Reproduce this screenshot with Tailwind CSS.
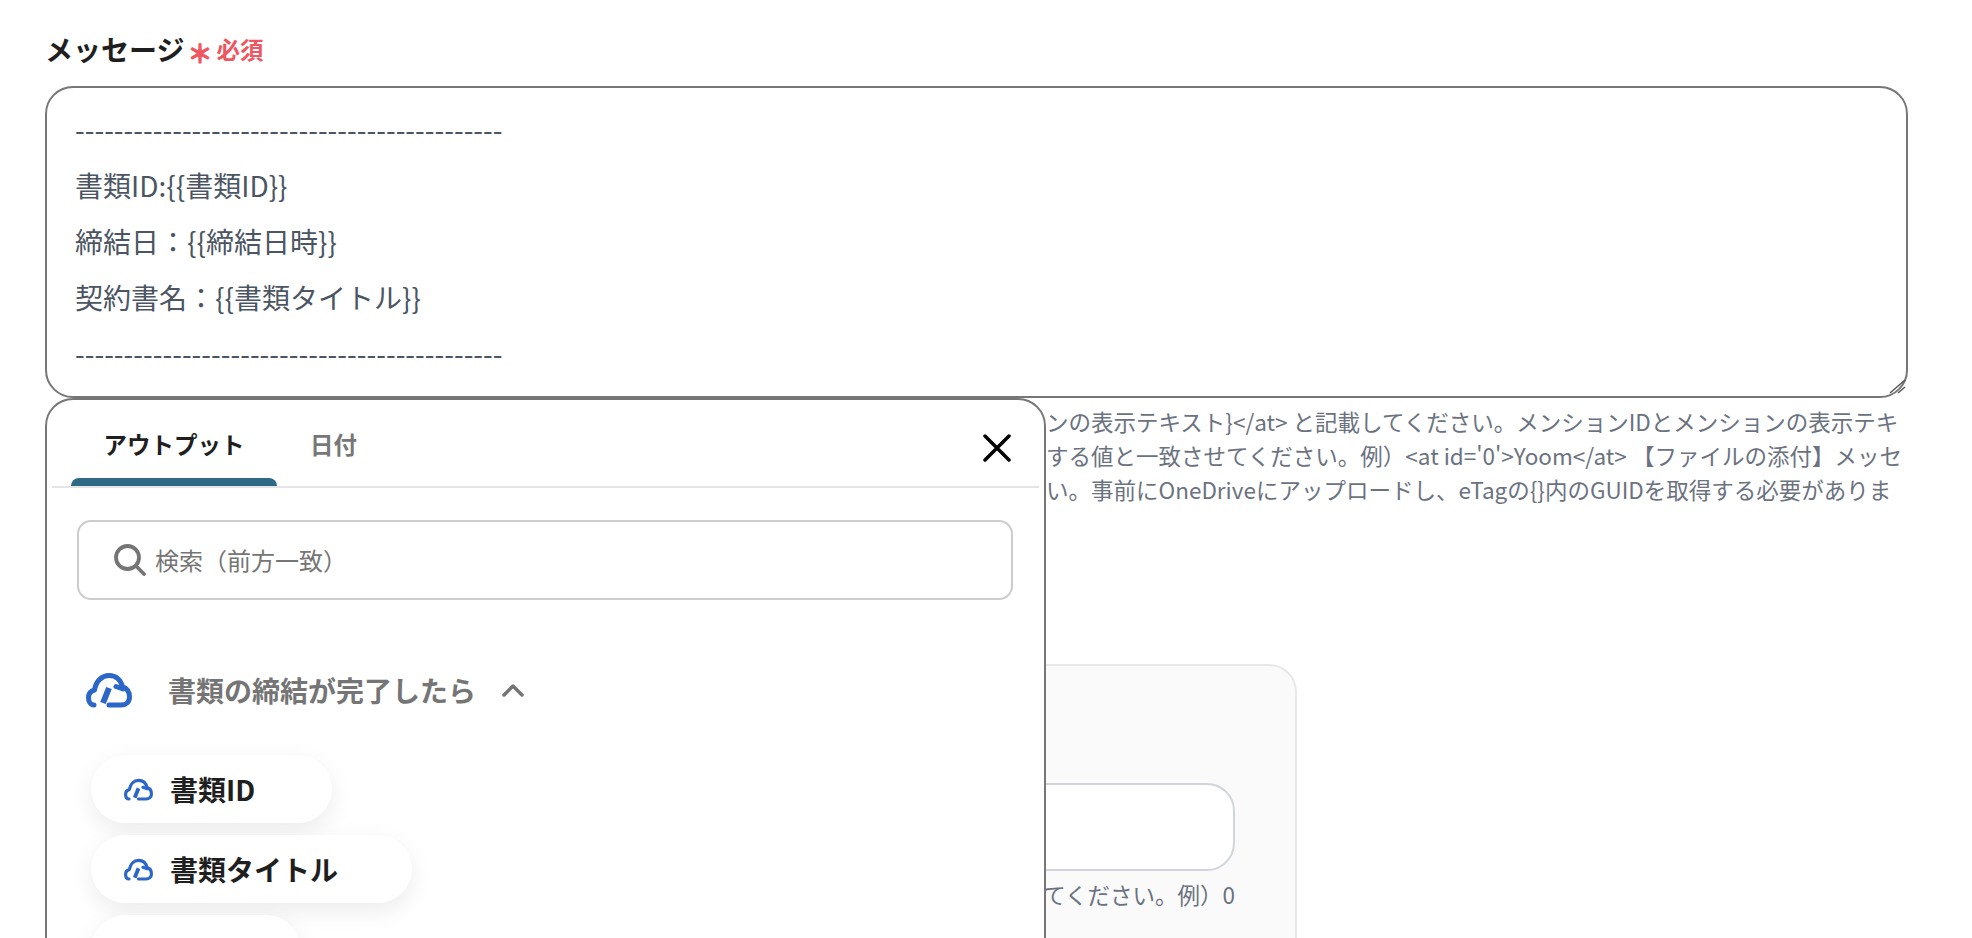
<!DOCTYPE html>
<html lang="ja">
<head>
    <meta charset="UTF-8">
    <title>メッセージ</title>
    <script src="https://cdn.jsdelivr.net/npm/@tailwindcss/browser@4"></script>
</head>
<body class="bg-white h-screen overflow-hidden font-['Noto_Sans_CJK_JP','Noto_Sans',sans-serif]">
    <div class="relative px-[45px] pt-[29px] h-[938px] overflow-hidden">
        <!-- label -->
        <div class="flex items-center h-[40px] mb-[17px]">
            <span class="text-[28px] font-bold text-[#1f1f1f]">メッセージ</span>
            <span class="ml-[3px] text-[25px] font-bold text-[#f0565f] leading-none mt-[6px] [-webkit-text-stroke:1px_#f0565f]">＊</span>
            <span class="ml-[4px] mt-[2px] text-[23.5px] font-bold text-[#f0565f]">必須</span>
        </div>

        <!-- message box -->
        <div class="relative">
            <textarea class="block w-[1863px] h-[312px] border-2 border-[#777] rounded-[28px] px-[28px] py-[13px] text-[28px] leading-[56px] text-[#4b5563] overflow-hidden resize-none" readonly>--------------------------------------------
書類ID:{{書類ID}}
締結日：{{締結日時}}
契約書名：{{書類タイトル}}
--------------------------------------------</textarea>
            <svg class="absolute left-[1843px] top-[292px] w-[18px] h-[16px]" viewBox="0 0 18 16" fill="none" stroke="#555" stroke-width="1.500">
                <path d="M2 15 17 2M10 15 17 9"/>
            </svg>
        </div>

        <!-- help text, the left part sits under the popup -->
        <div class="ml-[1001px] mt-[6px] w-[880px] text-[22.5px] leading-[34px] text-[#6b7280] whitespace-nowrap overflow-hidden">
            <div>ンの表示テキスト}&lt;/at&gt; と記載してください。メンションIDとメンションの表示テキ</div>
            <div>する値と一致させてください。例）&lt;at id='0'&gt;Yoom&lt;/at&gt; 【ファイルの添付】メッセ</div>
            <div>い。事前にOneDriveにアップロードし、eTagの{}内のGUIDを取得する必要がありま</div>
        </div>

        <!-- card behind the popup -->
        <div class="mt-[158px] w-[1252px] h-[400px] bg-[#fafafa] border-2 border-[#e8e8e8] rounded-[28px] px-[60px] pt-[117px]">
            <div class="h-[88px] bg-white border-2 border-[#d1d5db] rounded-[28px]"></div>
            <div class="mt-[6px] text-right text-[22.5px] leading-[34px] text-[#6b7280]">てください。例）0</div>
        </div>

        <!-- popup -->
        <div class="absolute left-[45px] top-[398px] w-[1001px] h-[620px] bg-white border-2 border-[#777] rounded-[28px] px-[5px]">
            <div class="relative flex h-[88px] border-b-2 border-[#e5e5e5]">
                <div class="relative w-[206px] ml-[19px] flex items-center justify-center text-[23.5px] font-bold text-[#1f1f1f] pt-[4px]">
                    アウトプット
                    <div class="absolute left-0 right-0 bottom-0 h-[8px] rounded-t-[8px] bg-[#2f6a85]"></div>
                </div>
                <div class="flex items-center ml-[33px] text-[23.5px] font-bold text-[#777] pt-[4px]">日付</div>
                <svg class="absolute right-[28px] top-[34px] w-[28px] h-[28px]" viewBox="0 0 28 28" fill="none" stroke="#000" stroke-width="3.500" stroke-linecap="round">
                    <path d="M2 2 26 26M26 2 2 26"/>
                </svg>
            </div>

            <div class="mx-[25px] mt-[32px] w-[936px] h-[80px] flex items-center border-2 border-[#ccc] rounded-[14px] pl-[35px]">
                <svg class="w-[32px] h-[32px] shrink-0" viewBox="0 0 32 32" fill="none" stroke="#757575" stroke-width="3.800" stroke-linecap="round">
                    <circle cx="13.500" cy="13.500" r="11.500"/>
                    <path d="M22 22 30 30"/>
                </svg>
                <span class="ml-[9px] text-[24px] text-[#757575]">検索（前方一致）</span>
            </div>

            <div class="flex items-center ml-[34px] mt-[68px] h-[44px]">
                <svg class="w-[46px] h-[36px]" viewBox="0 0 46 36" fill="none" stroke="#2b66c9" stroke-width="5" stroke-linecap="round" stroke-linejoin="round">
                    <path d="M8 33C4 33 2.500 29 2.500 25.500C2.500 21.500 5 19 8.500 18C10 9 16 3.500 23 3.500C30 3.500 35 8 36.500 15C41 16 43.500 20 43.500 25C43.500 30 40 33 35 33H23"/>
                    <path d="M23 16 17 31" stroke-width="6" stroke-linecap="butt"/>
                    <path d="M30 14.500 37 17"/>
                </svg>
                <span class="ml-[36px] text-[28px] font-bold text-[#757575]">書類の締結が完了したら</span>
                <svg class="ml-[26px] w-[22px] h-[14px]" viewBox="0 0 22 14" fill="none" stroke="#757575" stroke-width="3.500" stroke-linecap="round" stroke-linejoin="round">
                    <path d="M2 12 11 3 20 12"/>
                </svg>
            </div>

            <div class="ml-[39px] mt-[43px] flex flex-col items-start gap-[12px]">
                <div class="h-[68px] w-[241px] flex items-center pl-[33px] bg-white rounded-full shadow-[0_8px_24px_rgba(0,0,0,0.08)]">
                    <svg class="w-[29px] h-[23px]" viewBox="0 0 46 36" fill="none" stroke="#2b66c9" stroke-width="5" stroke-linecap="round" stroke-linejoin="round">
                        <path d="M8 33C4 33 2.500 29 2.500 25.500C2.500 21.500 5 19 8.500 18C10 9 16 3.500 23 3.500C30 3.500 35 8 36.500 15C41 16 43.500 20 43.500 25C43.500 30 40 33 35 33H23"/>
                        <path d="M23 16 17 31" stroke-width="6" stroke-linecap="butt"/>
                        <path d="M30 14.500 37 17"/>
                    </svg>
                    <span class="ml-[17px] text-[28px] font-bold text-[#1f1f1f]">書類ID</span>
                </div>
                <div class="h-[68px] w-[321px] flex items-center pl-[33px] bg-white rounded-full shadow-[0_8px_24px_rgba(0,0,0,0.08)]">
                    <svg class="w-[29px] h-[23px]" viewBox="0 0 46 36" fill="none" stroke="#2b66c9" stroke-width="5" stroke-linecap="round" stroke-linejoin="round">
                        <path d="M8 33C4 33 2.500 29 2.500 25.500C2.500 21.500 5 19 8.500 18C10 9 16 3.500 23 3.500C30 3.500 35 8 36.500 15C41 16 43.500 20 43.500 25C43.500 30 40 33 35 33H23"/>
                        <path d="M23 16 17 31" stroke-width="6" stroke-linecap="butt"/>
                        <path d="M30 14.500 37 17"/>
                    </svg>
                    <span class="ml-[17px] text-[28px] font-bold text-[#1f1f1f]">書類タイトル</span>
                </div>
                <div class="h-[68px] w-[209px] flex items-center pl-[33px] bg-white rounded-full shadow-[0_8px_24px_rgba(0,0,0,0.08)]">
                    <svg class="w-[29px] h-[23px]" viewBox="0 0 46 36" fill="none" stroke="#2b66c9" stroke-width="5" stroke-linecap="round" stroke-linejoin="round">
                        <path d="M8 33C4 33 2.500 29 2.500 25.500C2.500 21.500 5 19 8.500 18C10 9 16 3.500 23 3.500C30 3.500 35 8 36.500 15C41 16 43.500 20 43.500 25C43.500 30 40 33 35 33H23"/>
                        <path d="M23 16 17 31" stroke-width="6" stroke-linecap="butt"/>
                        <path d="M30 14.500 37 17"/>
                    </svg>
                    <span class="ml-[17px] mt-[3px] text-[28px] font-bold text-[#1f1f1f]">件名</span>
                </div>
            </div>
        </div>
    </div>
</body>
</html>
